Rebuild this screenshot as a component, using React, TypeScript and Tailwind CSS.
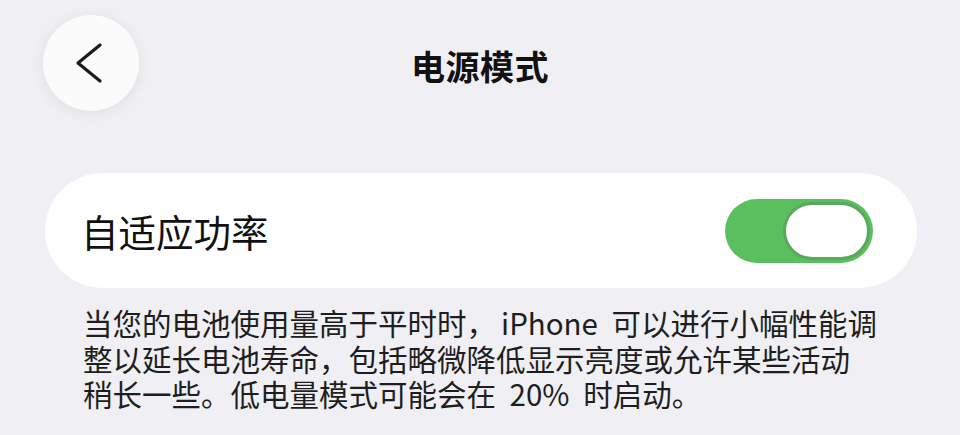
import React from "react";

const cjk = { fontFamily: '"Noto Sans CJK SC", "Noto Sans", sans-serif' };

function BackButton() {
  return (
    <button className="relative w-[96px] h-[96px] rounded-full bg-[#fbfbfc] shadow-[0_2px_14px_rgba(0,0,0,0.07)] flex items-center justify-center">
      <svg width="96" height="96" viewBox="0 0 96 96" className="absolute inset-0">
        <polyline
          points="57,30 35,48 57,66"
          fill="none"
          stroke="#1c1c1e"
          strokeWidth="3.2"
          strokeLinecap="round"
          strokeLinejoin="round"
        />
      </svg>
    </button>
  );
}

function Toggle() {
  return (
    <div className="w-[148px] h-[64px] rounded-full bg-[#5cbf5f] flex items-center justify-end pr-[3px]">
      <div className="w-[87px] h-[58px] rounded-full bg-white border-[3px] border-[#58a85d]" />
    </div>
  );
}

export default function App() {
  return (
    <div className="w-[960px] h-[435px] bg-[#efeff4] overflow-hidden" style={cjk}>
      <div className="grid grid-cols-[96px_1fr_96px] items-center px-[43px] pt-[15px]">
        <BackButton />
        <div className="text-center text-[34px] font-semibold text-[#111] leading-none pt-[5px] tracking-[0.5px]">电源模式</div>
        <div />
      </div>

      <div className="mt-[62px] ml-[45px] w-[872px] h-[115px] rounded-full bg-white flex items-center justify-between pl-[36px] pr-[44px]">
        <span className="text-[37.5px] text-[#111] leading-none">自适应功率</span>
        <Toggle />
      </div>

      <div className="mt-[17px] pl-[83px] text-[29.5px] leading-[35.5px] text-[#1e1e20] [word-spacing:7px]">
        <div>
          当您的电池使用量高于平时时，<span className="ml-[5px]">iPhone</span> 可以进行小幅性能调
        </div>
        <div>整以延长电池寿命，包括略微降低显示亮度或允许某些活动</div>
        <div>稍长一些。低电量模式可能会在 20% 时启动。</div>
      </div>
    </div>
  );
}
